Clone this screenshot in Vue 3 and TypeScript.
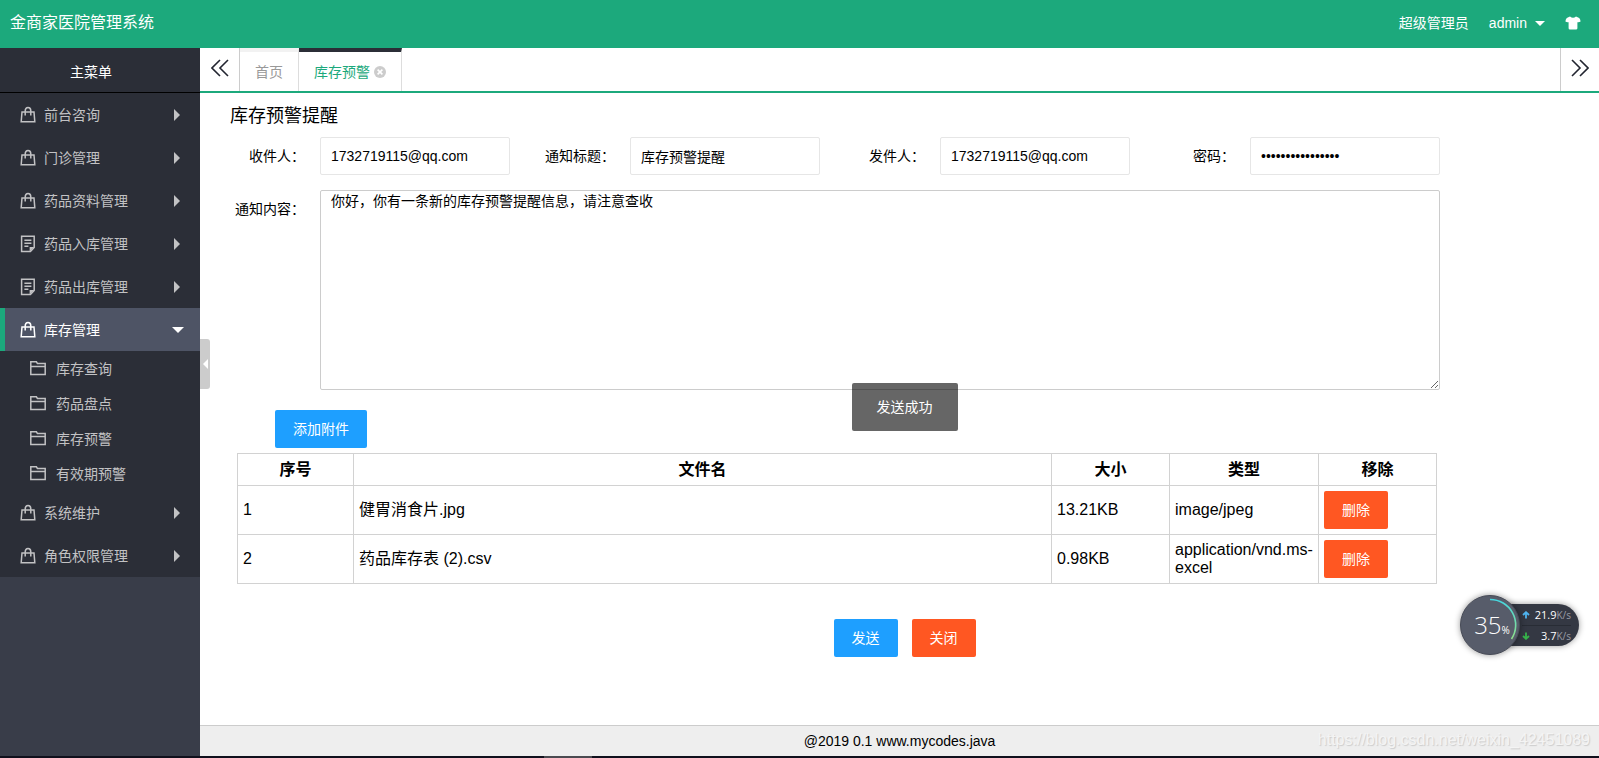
<script setup lang="ts">
import { ref } from 'vue'

type IconName = 'bag' | 'note'
interface MenuItem {
  label: string
  icon: IconName
  children?: string[]
}
interface Attachment {
  name: string
  size: string
  type: string
}

const menu: MenuItem[] = [
  { label: '前台咨询', icon: 'bag' },
  { label: '门诊管理', icon: 'bag' },
  { label: '药品资料管理', icon: 'bag' },
  { label: '药品入库管理', icon: 'note' },
  { label: '药品出库管理', icon: 'note' },
  { label: '库存管理', icon: 'bag', children: ['库存查询', '药品盘点', '库存预警', '有效期预警'] },
  { label: '系统维护', icon: 'bag' },
  { label: '角色权限管理', icon: 'bag' },
]

const receiver = ref('1732719115@qq.com')
const subject = ref('库存预警提醒')
const sender = ref('1732719115@qq.com')
const password = ref('abcdefghijklmnop')
const content = ref('你好，你有一条新的库存预警提醒信息，请注意查收')

const files = ref<Attachment[]>([
  { name: '健胃消食片.jpg', size: '13.21KB', type: 'image/jpeg' },
  { name: '药品库存表 (2).csv', size: '0.98KB', type: 'application/vnd.ms-excel' },
])

function removeFile(index: number) {
  files.value.splice(index, 1)
}
</script>

<template>
  <div class="page">
    <header class="topbar">
      <h1 class="brand">金商家医院管理系统</h1>
      <nav class="user">
        <a href="#">超级管理员</a>
        <a href="#" class="account">admin<span class="caret"></span></a>
        <button type="button" class="plain" aria-label="主题">
          <svg width="16" height="16" viewBox="0 0 16 16">
            <path d="M5 1.5 L1.8 3 Q.6 4 .4 6.6 Q2 7.6 3.6 7.2 V13.2 Q3.6 14.4 5 14.4 H11 Q12.4 14.4 12.4 13.2 V7.2 Q14 7.6 15.6 6.6 Q15.4 4 14.2 3 L11 1.5 Q8 4 5 1.5Z" fill="#fff" />
          </svg>
        </button>
      </nav>
    </header>

    <div class="body">
      <aside class="sidebar">
        <div class="menu">
          <h2 class="menu-title">主菜单</h2>
          <template v-for="item in menu" :key="item.label">
            <a href="#" class="menu-item" :class="{ open: item.children }">
              <svg v-if="item.icon === 'bag'" class="icon" viewBox="0 0 16 16">
                <path d="M2 5 H14 L14.8 14.8 H1.2Z M5.2 8.4 V4 Q5.2 .6 8 .6 Q10.8 .6 10.8 4 V8.4" />
              </svg>
              <svg v-else class="icon" viewBox="0 0 16 16">
                <path d="M1.6 .2 H14.2 V11.4 L10.4 15.6 H1.6Z M4.4 4.3 H11.4 M4.4 7.3 H11.4 M4.4 10.3 H8.4" />
                <path class="solid" d="M9.6 15.6 V11 H14.2Z" />
              </svg>
              <span class="menu-label">{{ item.label }}</span>
              <span class="arrow"></span>
            </a>
            <div v-if="item.children" class="submenu">
              <a v-for="child in item.children" :key="child" href="#" class="sub-item">
                <svg class="icon" viewBox="0 0 16 16">
                  <path d="M.8 13.4 V.8 H6.4 L7.4 2.4 H15.2 V13.4Z M.8 5.4 H15.2" />
                </svg>
                <span>{{ child }}</span>
              </a>
            </div>
          </template>
        </div>
        <button type="button" class="collapse" aria-label="收起菜单"></button>
      </aside>

      <main class="main">
        <div class="tabs">
          <button type="button" class="plain scroll left" aria-label="向左">
            <svg width="18" height="18" viewBox="0 0 18 18"><path d="M9 1 L1 9 L9 17 M17 1 L9 9 L17 17" /></svg>
          </button>
          <a href="#" class="tab">首页</a>
          <a href="#" class="tab active">库存预警
            <svg width="12" height="12" viewBox="0 0 12 12">
              <circle cx="6" cy="6" r="6" fill="#ccc" />
              <path d="M3.6 3.6 L8.4 8.4 M8.4 3.6 L3.6 8.4" stroke="#fff" stroke-width="1.6" />
            </svg>
          </a>
          <button type="button" class="plain scroll right" aria-label="向右">
            <svg width="18" height="18" viewBox="0 0 18 18"><path d="M1 1 L9 9 L1 17 M9 1 L17 9 L9 17" /></svg>
          </button>
        </div>

        <form class="content" @submit.prevent>
          <h3 class="heading">库存预警提醒</h3>
          <div class="fields">
            <div class="field"><label for="receiver">收件人：</label><input id="receiver" v-model="receiver" type="text" /></div>
            <div class="field"><label for="subject">通知标题：</label><input id="subject" v-model="subject" type="text" /></div>
            <div class="field"><label for="sender">发件人：</label><input id="sender" v-model="sender" type="text" /></div>
            <div class="field"><label for="password">密码：</label><input id="password" v-model="password" type="password" /></div>
          </div>
          <div class="field message">
            <label for="content">通知内容：</label>
            <textarea id="content" v-model="content"></textarea>
          </div>

          <button type="button" class="btn blue add">添加附件</button>

          <table class="files">
            <colgroup>
              <col class="c-no" /><col /><col class="c-size" /><col class="c-type" /><col class="c-size" />
            </colgroup>
            <thead>
              <tr><th>序号</th><th>文件名</th><th>大小</th><th>类型</th><th>移除</th></tr>
            </thead>
            <tbody>
              <tr v-for="(file, i) in files" :key="file.name">
                <td>{{ i + 1 }}</td>
                <td>{{ file.name }}</td>
                <td>{{ file.size }}</td>
                <td>{{ file.type }}</td>
                <td><button type="button" class="btn red" @click="removeFile(i)">删除</button></td>
              </tr>
            </tbody>
          </table>

          <div class="actions">
            <button type="submit" class="btn blue">发送</button>
            <button type="button" class="btn red">关闭</button>
          </div>
        </form>

        <footer class="footer">@2019 0.1 www.mycodes.java</footer>
      </main>
    </div>

    <div class="taskbar"><span></span></div>

    <div class="toast" role="status">发送成功</div>
    <div class="watermark">https://blog.csdn.net/weixin_42451089</div>

    <div class="monitor">
      <div class="gauge">
        <svg class="ring" width="60" height="60" viewBox="0 0 60 60">
          <defs>
            <linearGradient id="ring" x1="0" y1="0" x2="0" y2="1">
              <stop offset="0" stop-color="#45d6e0" />
              <stop offset="1" stop-color="#8fe08a" />
            </linearGradient>
          </defs>
          <path d="M30 4.5 A25.5 25.5 0 0 1 51.5 44" fill="none" stroke="url(#ring)" stroke-width="1.6" />
        </svg>
        <span class="percent">35</span><span class="sign">%</span>
      </div>
      <div class="speeds">
        <div class="speed">
          <svg width="8" height="8" viewBox="0 0 8 8"><path d="M4 7.5 V1.5 M1 4 L4 1.2 L7 4" stroke="#4fb4f0" /></svg>
          <b>21.9</b><i>K/s</i>
        </div>
        <div class="speed">
          <svg width="8" height="8" viewBox="0 0 8 8"><path d="M4 .5 V6.5 M1 4 L4 6.8 L7 4" stroke="#36b34a" /></svg>
          <b>3.7</b><i>K/s</i>
        </div>
      </div>
    </div>
  </div>
</template>

<style>
body {
  margin: 0;
}
</style>

<style scoped>
.page,
.page * {
  box-sizing: border-box;
}
.page {
  position: relative;
  display: flex;
  flex-direction: column;
  min-height: 100vh;
  font: 14px/20px "Liberation Sans", "Noto Sans CJK SC", sans-serif;
  color: #000;
  background: #fff;
}
h1, h2, h3 {
  margin: 0;
  font-weight: 400;
}
a {
  color: inherit;
  text-decoration: none;
}
button, input, textarea {
  font: inherit;
  color: inherit;
}
.plain {
  display: flex;
  align-items: center;
  justify-content: center;
  padding: 0;
  border: 0;
  background: none;
}
.topbar {
  display: flex;
  align-items: center;
  justify-content: space-between;
  height: 48px;
  padding: 0 18px 2px 10px;
  color: #fff;
  background: #1ca97c;
}
.brand {
  font-size: 16px;
}
.user {
  display: flex;
  align-items: center;
  gap: 20px;
}
.account {
  display: flex;
  align-items: center;
  gap: 8px;
}
.caret {
  border: 5px solid transparent;
  border-top-color: #fff;
  border-bottom: 0;
}
.body {
  display: flex;
  flex: 1;
}
.sidebar {
  position: relative;
  flex: none;
  width: 200px;
  background: #393d49;
}
.menu {
  color: #c2c2c4;
  background: #2b2e37;
}
.menu-title {
  height: 45px;
  padding-right: 18px;
  border-bottom: 1px solid #000;
  font-size: 14px;
  line-height: 48px;
  color: #fff;
  text-align: center;
}
.menu-item {
  display: flex;
  align-items: center;
  height: 43px;
  padding: 0 20px 0 15px;
  border-left: 5px solid transparent;
}
.icon {
  flex: none;
  width: 16px;
  height: 16px;
  overflow: visible;
  fill: none;
  stroke: currentColor;
  stroke-width: 1.5;
}
.solid {
  fill: currentColor;
  stroke: none;
}
.menu-label {
  flex: 1;
  margin-left: 8px;
}
.arrow {
  border: 6px solid transparent;
  border-left-color: currentColor;
  border-right: 0;
}
.open {
  padding-right: 16px;
  border-left-color: #1ca97c;
  color: #fff;
  background: #4e5465;
}
.open .arrow {
  border: 6px solid transparent;
  border-top-color: currentColor;
  border-bottom: 0;
}
.sub-item {
  display: flex;
  align-items: center;
  gap: 10px;
  height: 35px;
  padding-left: 30px;
}
.collapse {
  position: absolute;
  top: calc(50% - 63px);
  left: 100%;
  display: flex;
  align-items: center;
  width: 10px;
  height: 50px;
  padding: 0 0 0 3px;
  border: 0;
  border-radius: 0 3px 3px 0;
  background: #ccc;
}
.collapse::before {
  content: "";
  border: 5px solid transparent;
  border-right-color: #fff;
  border-left: 0;
}
.main {
  display: flex;
  flex: 1;
  flex-direction: column;
  min-width: 0;
}
.tabs {
  display: flex;
  height: 45px;
  border-bottom: 2px solid #1ca97c;
}
.scroll {
  padding-bottom: 4px;
}
.scroll path {
  fill: none;
  stroke: #222530;
  stroke-width: 1.6;
}
.left {
  width: 40px;
  border-right: 1px solid #ccc;
}
.right {
  width: 39px;
  margin-left: auto;
  border-left: 1px solid #ccc;
}
.tab {
  display: flex;
  align-items: center;
  gap: 4px;
  padding: 0 15px;
  border-top: 4px solid #f2f2f2;
  border-right: 1px solid #ddd;
  color: #999;
}
.active {
  border-top-color: #2b2e37;
  color: #1ca97c;
}
.content {
  flex: 1;
  padding: 8px 159px 24px 10px;
}
.heading {
  margin-left: 20px;
  font-size: 18px;
  line-height: 30px;
}
.fields {
  display: grid;
  grid-template-columns: repeat(4, minmax(0, 1fr));
  gap: 10px;
  margin: 6px 0 15px;
}
.field {
  display: flex;
}
.field label {
  flex: none;
  width: 110px;
  padding: 9px 15px 0 0;
  text-align: right;
}
.field input {
  flex: 1;
  min-width: 0;
  height: 38px;
  padding: 0 10px;
  border: 1px solid #e6e6e6;
  border-radius: 2px;
  background: #fff;
}
.message textarea {
  flex: 1;
  height: 200px;
  padding: 0 10px;
  border: 1px solid #ccc;
  border-radius: 2px;
  background: #fff;
  resize: both;
}
.btn {
  height: 38px;
  padding: 0 18px;
  border: 0;
  border-radius: 2px;
  color: #fff;
}
.blue {
  background: #1e9fff;
}
.red {
  background: #ff5722;
}
.add {
  display: block;
  margin: 20px 0 5px 65px;
}
.files {
  width: calc(100% - 30px);
  margin-left: 27px;
  border-collapse: collapse;
  table-layout: fixed;
  font-size: 16px;
  line-height: 18px;
}
.c-no {
  width: 116px;
}
.c-size {
  width: 118px;
}
.c-type {
  width: 149px;
}
.files th,
.files td {
  padding: 5px;
  border: 1px solid #d2d2d2;
}
.files th {
  line-height: 21px;
}
.files .btn {
  display: block;
  font-size: 14px;
}
.actions {
  display: flex;
  justify-content: center;
  gap: 14px;
  margin: 35px -159px 0 0;
}
.footer {
  height: 31px;
  border-top: 1px solid #ccc;
  line-height: 30px;
  text-align: center;
  background: #eee;
}
.taskbar {
  height: 2px;
  padding-left: 34%;
  background: #10101c;
}
.taskbar span {
  display: block;
  width: 48px;
  height: 2px;
  background: #4a4a50;
}
.toast {
  position: absolute;
  top: 383px;
  left: calc(50% + 52px);
  padding: 14px 25px;
  border-radius: 2px;
  color: #fff;
  background: rgba(0, 0, 0, 0.6);
}
.watermark {
  position: absolute;
  right: 9px;
  bottom: 8px;
  font-size: 16px;
  color: #f4f4f4;
  text-shadow: 1px 1px 1px #ccc;
}
.monitor {
  position: absolute;
  right: 20px;
  bottom: 103px;
  display: flex;
  align-items: center;
  font-family: "Open Sans", sans-serif;
}
.gauge {
  position: relative;
  z-index: 1;
  display: flex;
  align-items: baseline;
  justify-content: center;
  width: 60px;
  height: 60px;
  padding-left: 4px;
  border: 1px solid #474b57;
  border-radius: 50%;
  color: #fff;
  background: #575c6a;
  box-shadow: 0 0 6px rgba(0, 0, 0, 0.4);
}
.ring {
  position: absolute;
  top: -1px;
  left: -1px;
}
.percent {
  font-size: 24px;
  font-weight: 300;
  line-height: 58px;
}
.sign {
  font-size: 10px;
}
.speeds {
  width: 77px;
  margin-left: -18px;
  padding: 0 8px 0 20px;
  border-radius: 0 21px 21px 0;
  color: #fff;
  background: #343843;
  box-shadow: 0 0 6px rgba(0, 0, 0, 0.4);
}
.speed {
  display: flex;
  align-items: center;
  height: 21px;
  font-size: 11px;
}
.speed + .speed {
  border-top: 1px solid #282c35;
}
.speed svg {
  flex: none;
  fill: none;
  stroke-width: 1.8;
}
.speed b {
  margin-left: auto;
  font-weight: 400;
}
.speed i {
  font-size: 10px;
  font-style: normal;
  color: #9a9da6;
}
</style>
